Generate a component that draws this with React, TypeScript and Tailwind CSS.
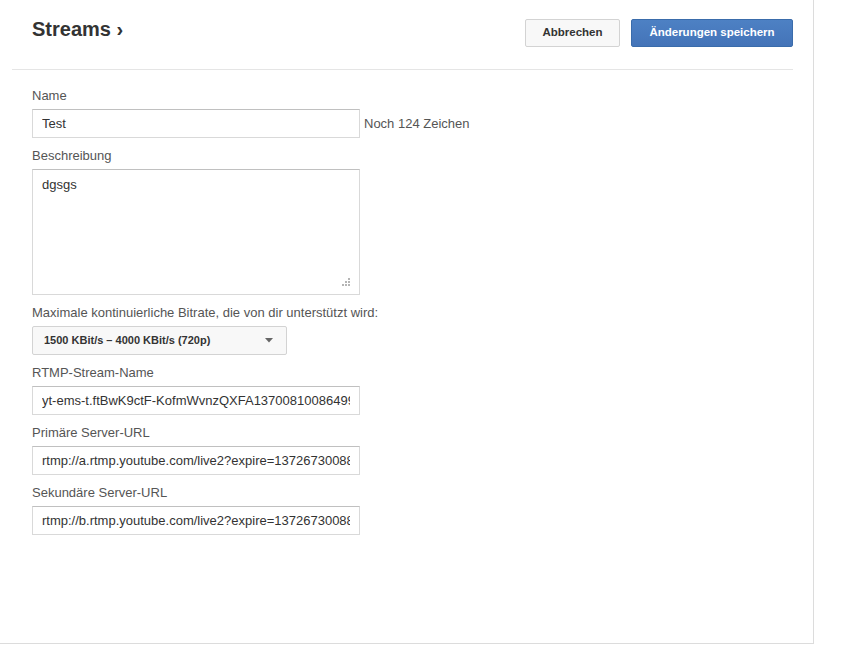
import React from 'react'

const font = { fontFamily: '"Liberation Sans", Arial, sans-serif' }

function Field({ label, children }: { label: string; children: React.ReactNode }) {
  return (
    <div className="flex flex-col">
      <label className="text-[13px] leading-4 text-[#555] mb-[5px]">{label}</label>
      {children}
    </div>
  )
}

function TextInput({ value }: { value: string }) {
  return (
    <input
      readOnly
      value={value}
      className="w-[328px] h-[29px] px-[9px] border border-[#d9d9d9] border-t-[#c0c0c0] bg-white text-[13px] text-[#333] outline-none"
      style={font}
    />
  )
}

export default function App() {
  return (
    <div className="bg-white min-h-screen" style={font}>
      <div className="w-[814px] h-[644px] border-r border-b border-[#dcdcdc] pl-[12px] pr-[20px]">
        {/* Header */}
        <div className="flex justify-between items-start pt-[16px] pb-[22px] pl-[20px] border-b border-[#e5e5e5]">
          <h1 className="mt-px text-[20px] leading-6 font-bold text-[#333]">Streams ›</h1>
          <div className="flex gap-[11px] mt-[3px]">
            <button className="w-[95px] h-[28px] rounded-[2px] border border-[#d3d3d3] bg-[#f8f8f8] text-[11.5px] font-bold text-[#333]">
              Abbrechen
            </button>
            <button className="w-[162px] h-[28px] rounded-[2px] border border-[#3a6cab] bg-gradient-to-b from-[#4d81c4] to-[#4474b8] text-[11.5px] font-bold text-white">
              Änderungen speichern
            </button>
          </div>
        </div>

        {/* Form */}
        <div className="pl-[20px] pt-[18px] flex flex-col gap-[10px]">
          <Field label="Name">
            <div className="flex items-center gap-[4px]">
              <TextInput value="Test" />
              <span className="text-[13px] text-[#555]">Noch 124 Zeichen</span>
            </div>
          </Field>

          <Field label="Beschreibung">
            <div className="relative w-[328px] h-[126px]">
              <textarea
                readOnly
                value="dgsgs"
                className="w-full h-full resize-none px-[9px] py-[5px] border border-[#d9d9d9] border-t-[#c0c0c0] text-[13px] text-[#333] outline-none"
                style={font}
              />
              <svg className="absolute right-[9px] bottom-[8px]" width="10" height="10" viewBox="0 0 10 10">
                <g fill="#b5b5b5">
                  <rect x="7" y="1" width="2" height="2" />
                  <rect x="4" y="4" width="2" height="2" />
                  <rect x="7" y="4" width="2" height="2" />
                  <rect x="1" y="7" width="2" height="2" />
                  <rect x="4" y="7" width="2" height="2" />
                  <rect x="7" y="7" width="2" height="2" />
                </g>
              </svg>
            </div>
          </Field>

          <Field label="Maximale kontinuierliche Bitrate, die von dir unterstützt wird:">
            <div className="w-[255px] h-[29px] flex items-center justify-between pl-[11px] pr-[13px] border border-[#d3d3d3] bg-[#f8f8f8] rounded-[2px]">
              <span className="text-[11px] font-bold text-[#333]">1500 KBit/s – 4000 KBit/s (720p)</span>
              <svg width="8" height="5" viewBox="0 0 8 5">
                <path d="M0 0h8L4 4.5z" fill="#666" />
              </svg>
            </div>
          </Field>

          <Field label="RTMP-Stream-Name">
            <TextInput value="yt-ems-t.ftBwK9ctF-KofmWvnzQXFA13700810086499" />
          </Field>

          <Field label="Primäre Server-URL">
            <TextInput value="rtmp://a.rtmp.youtube.com/live2?expire=1372673008800" />
          </Field>

          <Field label="Sekundäre Server-URL">
            <TextInput value="rtmp://b.rtmp.youtube.com/live2?expire=1372673008800" />
          </Field>
        </div>
      </div>
    </div>
  )
}
